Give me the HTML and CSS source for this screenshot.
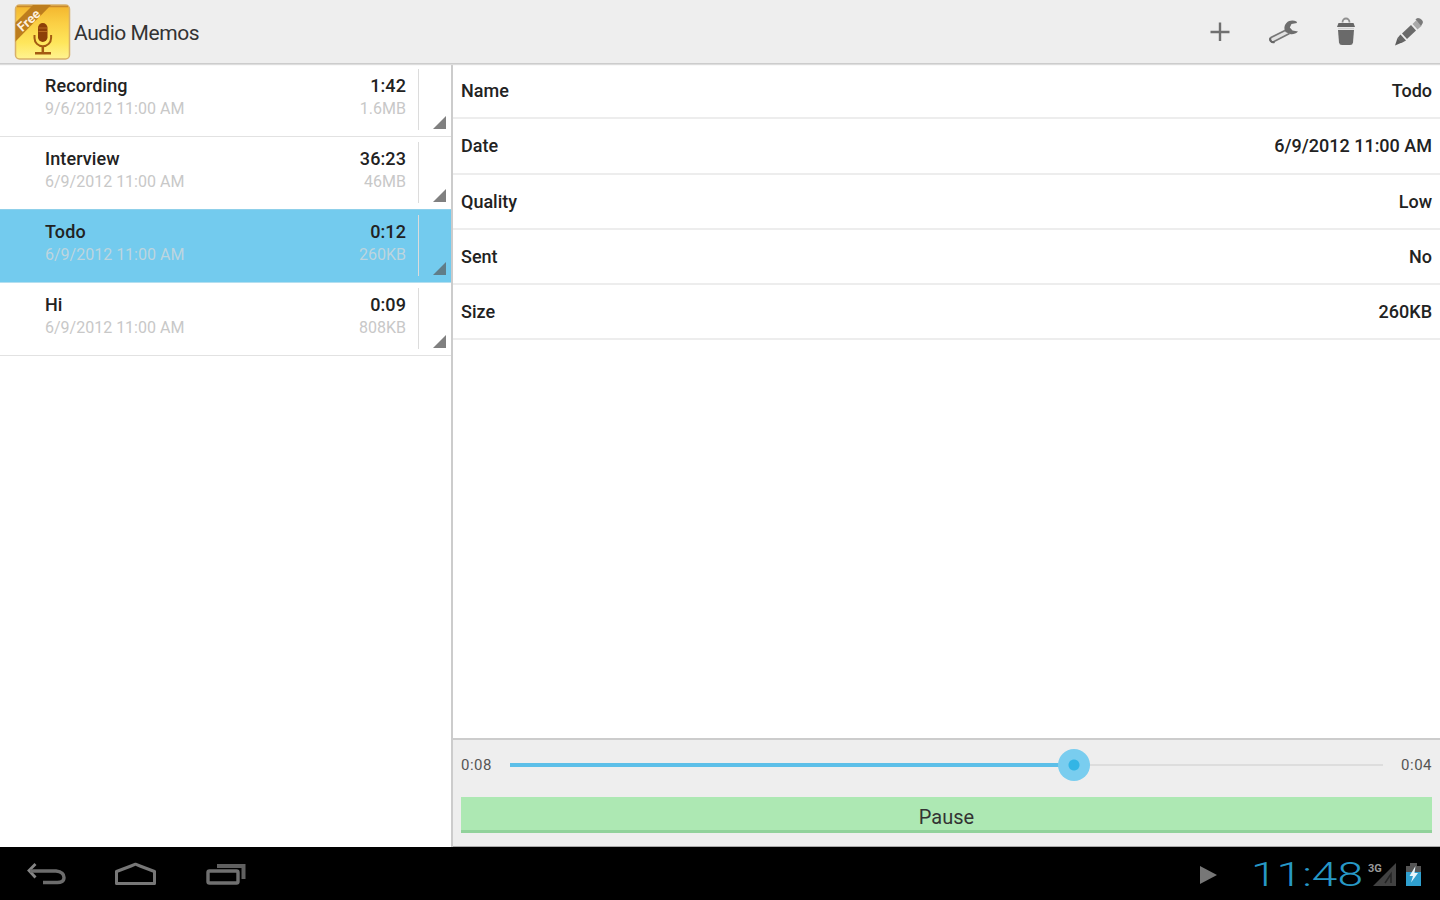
FILE: index.html
```html
<!DOCTYPE html>
<html lang="en">
<head>
    <meta charset="UTF-8">
    <meta name="viewport" content="width=device-width, initial-scale=1.0">
    <title>Audio Memos</title>
    <link rel="stylesheet" href="styles.css">
</head>
<body>
    <header class="action-bar">
        <svg class="app-icon" width="58" height="58" viewBox="0 0 58 58">
            <defs>
                <linearGradient id="gold" x1="0" y1="0" x2="0" y2="1">
                    <stop offset="0" stop-color="#f3b52d"/>
                    <stop offset="0.35" stop-color="#fbd045"/>
                    <stop offset="0.7" stop-color="#fee65c"/>
                    <stop offset="1" stop-color="#fff391"/>
                </linearGradient>
                <clipPath id="iconShape"><rect x="1.5" y="2" width="54" height="54" rx="4"/></clipPath>
            </defs>
            <rect x="1.5" y="2" width="54" height="54" rx="4" fill="url(#gold)" stroke="#d8b06a" stroke-width="1.5"/>
            <path d="M3 3.5h51" stroke="#c98a2c" stroke-width="1.5"/>
            <g clip-path="url(#iconShape)">
                <path d="M1 20L19 2H37L1 39z" fill="#bd7d1d"/>
                <text class="ribbon-text" x="-14" y="4" transform="translate(16 17) rotate(-42)">Free</text>
            </g>
            <rect x="24" y="20" width="9.500" height="19" rx="4.750" fill="#8d3f08"/>
            <path d="M24.500 25h8.500M24.500 28.500h8.500" stroke="#b96a20" stroke-width="1"/>
            <path d="M20.500 32v3a8.300 8.300 0 0 0 16.600 0v-3" fill="none" stroke="#a45b12" stroke-width="2"/>
            <path d="M28.800 43v7M21 50.200h16" fill="none" stroke="#a45b12" stroke-width="2.500"/>
        </svg>
        <h1>Audio Memos</h1>
        <div class="actions">
            <svg width="32" height="32" viewBox="0 0 32 32">
                <path d="M16 6.500v18.500M6.500 16h19" stroke="#707070" stroke-width="2.400" fill="none"/>
            </svg>
            <svg width="32" height="32" viewBox="0 0 32 32">
                <path d="M18 14.500L4 21.500a2.600 2.600 0 0 0 2.600 4.300L22.500 17.500" fill="#e2e2e2" stroke="#777" stroke-width="1.700"/>
                <path d="M3.500 22a3 3 0 0 0 4 4" fill="none" stroke="#666" stroke-width="2"/>
                <path d="M29.500 5.500C24 2.500 16.500 6 17.500 13.500L18.500 16L23 18C25.500 18.500 29 18 31 15.500L25.500 14.500L22.800 11.500L24.500 8L30 7z" fill="#6d6d6d"/>
            </svg>
            <svg width="32" height="32" viewBox="0 0 32 32">
                <path d="M12.500 6.500a3.500 4 0 0 1 7 0" fill="none" stroke="#909090" stroke-width="1.800"/>
                <path d="M8.500 7h15l1.500 4H7z" fill="#666"/>
                <path d="M8 14h16l-1 12.500q-.3 2.500-3 2.500h-8q-2.700 0-3-2.500z" fill="#6a6a6a"/>
                <path d="M8 12.500h16" stroke="#d0d0d0" stroke-width="1.500"/>
            </svg>
            <svg width="32" height="32" viewBox="0 0 32 32">
                <path d="M2 29.500L4.500 22L9 26.500z" fill="#5c5c5c"/>
                <path d="M4.500 22L7.500 18.500L13 24.500L8.500 27z" fill="#666"/>
                <path d="M9 17.500L18 9L23 14.500L14 23z" fill="#6a6a6a"/>
                <path d="M19.500 8L23 4.500L28.500 10L24.500 13.500z" fill="#a9a9a9"/>
                <path d="M22.500 3.500Q24 1 27 2.500Q31 5 29.500 7.500L28 10z" fill="#7a7a7a"/>
            </svg>
        </div>
    </header>

    <main class="content">
        <ul class="memo-list">
            <li class="memo">
                <div class="memo-line"><span>Recording</span><span>1:42</span></div>
                <div class="memo-sub"><span>9/6/2012 11:00 AM</span><span>1.6MB</span></div>
            </li>
            <li class="memo">
                <div class="memo-line"><span>Interview</span><span>36:23</span></div>
                <div class="memo-sub"><span>6/9/2012 11:00 AM</span><span>46MB</span></div>
            </li>
            <li class="memo selected">
                <div class="memo-line"><span>Todo</span><span>0:12</span></div>
                <div class="memo-sub"><span>6/9/2012 11:00 AM</span><span>260KB</span></div>
            </li>
            <li class="memo">
                <div class="memo-line"><span>Hi</span><span>0:09</span></div>
                <div class="memo-sub"><span>6/9/2012 11:00 AM</span><span>808KB</span></div>
            </li>
        </ul>

        <section class="details">
            <dl class="fields">
                <div class="field"><dt>Name</dt><dd>Todo</dd></div>
                <div class="field"><dt>Date</dt><dd>6/9/2012 11:00 AM</dd></div>
                <div class="field"><dt>Quality</dt><dd>Low</dd></div>
                <div class="field"><dt>Sent</dt><dd>No</dd></div>
                <div class="field"><dt>Size</dt><dd>260KB</dd></div>
            </dl>
            <div class="player">
                <div class="progress">
                    <span>0:08</span>
                    <div class="track">
                        <div class="track-fill"></div>
                        <div class="thumb"></div>
                    </div>
                    <span>0:04</span>
                </div>
                <button type="button">Pause</button>
            </div>
        </section>
    </main>

    <footer class="system-bar">
        <div class="nav-buttons">
            <svg width="42" height="28" viewBox="0 0 42 28">
                <path d="M9.500 2L3 8.500l6.500 7" fill="none" stroke="#858585" stroke-width="2.800"/>
                <path d="M4 9h26q8 1 8 6.500t-8 5H17" fill="none" stroke="#6c6c6c" stroke-width="3.400"/>
            </svg>
            <svg width="44" height="28" viewBox="0 0 44 28">
                <path d="M2.500 21.500V9.500L17 4l4.500-1.800L26 4l14.500 5.500v12z" fill="none" stroke="#777" stroke-width="3" stroke-linejoin="round"/>
            </svg>
            <svg width="44" height="28" viewBox="0 0 44 28">
                <rect x="4" y="9" width="30" height="12" rx="1.500" fill="none" stroke="#707070" stroke-width="3.400"/>
                <path d="M13 4h26.500v13" fill="none" stroke="#606060" stroke-width="4"/>
            </svg>
        </div>
        <div class="status">
            <svg width="18" height="20" viewBox="0 0 18 20"><path d="M0 1L17 10L0 19z" fill="#777"/></svg>
            <svg class="clock" width="112" height="44" viewBox="0 0 112 44">
                <text x="0" y="33" textLength="112" lengthAdjust="spacingAndGlyphs">11:48</text>
            </svg>
            <svg class="signal" width="30" height="28" viewBox="0 0 30 28">
                <path d="M5 25L28 2V25z" fill="#424242"/>
                <path d="M17 22l6-9v9" fill="none" stroke="#232323" stroke-width="1.500"/>
                <text class="network" x="0" y="11">3G</text>
            </svg>
            <svg class="battery" width="18" height="26" viewBox="0 0 18 26">
                <path d="M5 1h7v3h4v7H1V4h4z" fill="#555"/>
                <path d="M1 10h15v14H1z" fill="#2f9fce"/>
                <path d="M10.500 4L4.500 14H8L6 20.500L13 11H9.500z" fill="#e8f5fa"/>
            </svg>
        </div>
    </footer>
</body>
</html>
```
FILE: styles.css
```css
* {
    margin: 0;
    padding: 0;
    box-sizing: border-box;
}

body {
    display: flex;
    flex-direction: column;
    height: 100vh;
    overflow: hidden;
    background-color: #fff;
    font-family: Roboto, sans-serif;
    color: #222;
}

svg {
    display: block;
    flex: none;
}

.action-bar {
    display: flex;
    align-items: center;
    height: 64px;
    padding: 0 15px 0 14px;
    background-color: #eee;
    border-bottom: 1px solid #ccc;
    box-shadow: 0 1px 1px #ddd;
    z-index: 1;
}

.app-icon {
    margin-top: 1px;
}

h1 {
    margin: 2px 0 0 2px;
    font-size: 21px;
    font-weight: 400;
    letter-spacing: -0.45px;
    color: #333;
}

.ribbon-text {
    font-size: 13px;
    font-weight: 700;
    fill: #fff0dc;
}

.actions {
    display: flex;
    gap: 31px;
    margin-left: auto;
}

.content {
    display: flex;
    flex: 1;
}

.memo-list {
    width: 451px;
    list-style: none;
}

.memo {
    position: relative;
    height: 73px;
    padding: 10px 45px 0;
    border-bottom: 1px solid #e2e2e2;
}

/* divider beside the menu corner */
.memo::before {
    content: "";
    position: absolute;
    top: 5px;
    right: 32px;
    width: 1px;
    height: 61px;
    background-color: #dcdcdc;
}

.memo::after {
    content: "";
    position: absolute;
    right: 5px;
    bottom: 7px;
    border-left: 13px solid transparent;
    border-bottom: 13px solid #808080;
}

.memo.selected {
    background-color: #73cbee;
    border-bottom-color: #b4dff0;
    box-shadow: 0 -1px 0 #8fd0ea;
}

.memo.selected::after {
    border-bottom-color: #607d88;
}

.memo-line,
.memo-sub {
    display: flex;
    justify-content: space-between;
}

.memo-line {
    font-size: 18px;
    font-weight: 500;
    line-height: 24px;
    letter-spacing: 0.1px;
}

.memo-sub {
    font-size: 16px;
    line-height: 22px;
    color: #c8c8c8;
}

.selected .memo-sub {
    color: #bdd5de;
}

.details {
    display: flex;
    flex-direction: column;
    flex: 1;
    border-left: 2px solid #ccc;
}

.fields {
    flex: 1;
}

.field {
    display: flex;
    align-items: center;
    justify-content: space-between;
    height: 55.3px;
    padding: 0 8px;
    border-bottom: 2px solid #ededed;
    font-size: 18px;
    font-weight: 500;
}

.player {
    height: 109px;
    padding: 9px 8px 0;
    background-color: #eee;
    border-top: 2px solid #ccc;
    border-bottom: 1px solid #aaa;
}

.progress {
    display: flex;
    align-items: center;
    height: 32px;
    font-size: 15px;
    letter-spacing: 0.5px;
    color: #555;
}

.track {
    position: relative;
    flex: 1;
    height: 2px;
    margin: 0 18px;
    background-color: #ddd;
}

.track-fill {
    position: absolute;
    top: -1px;
    width: 64.6%;
    height: 4px;
    background-color: #5cbfe8;
}

.thumb {
    position: absolute;
    top: -15px;
    left: 64.6%;
    width: 32px;
    height: 32px;
    margin-left: -16px;
    border-radius: 50%;
    background: radial-gradient(circle, #33b5e5 5px, #79cdef 6px);
}

button {
    display: block;
    width: 100%;
    height: 36px;
    margin-top: 16px;
    padding-top: 6px;
    border: none;
    border-bottom: 3px solid #91d29b;
    background-color: #ade8b3;
    font-family: inherit;
    font-size: 20px;
    color: #333;
}

.system-bar {
    display: flex;
    align-items: center;
    justify-content: space-between;
    height: 53px;
    padding: 3px 17px 0 26px;
    background-color: #000;
}

.nav-buttons {
    display: flex;
    gap: 46px;
}

.nav-buttons svg {
    margin-top: 2px;
}

.status {
    display: flex;
    align-items: center;
}

.clock {
    margin-left: 33px;
    font-size: 34px;
    font-weight: 300;
    fill: #2798c6;
}

.signal {
    margin-left: 5px;
}

.network {
    font-size: 11px;
    font-weight: 700;
    fill: #999;
}

.battery {
    margin-left: 7px;
}
```
